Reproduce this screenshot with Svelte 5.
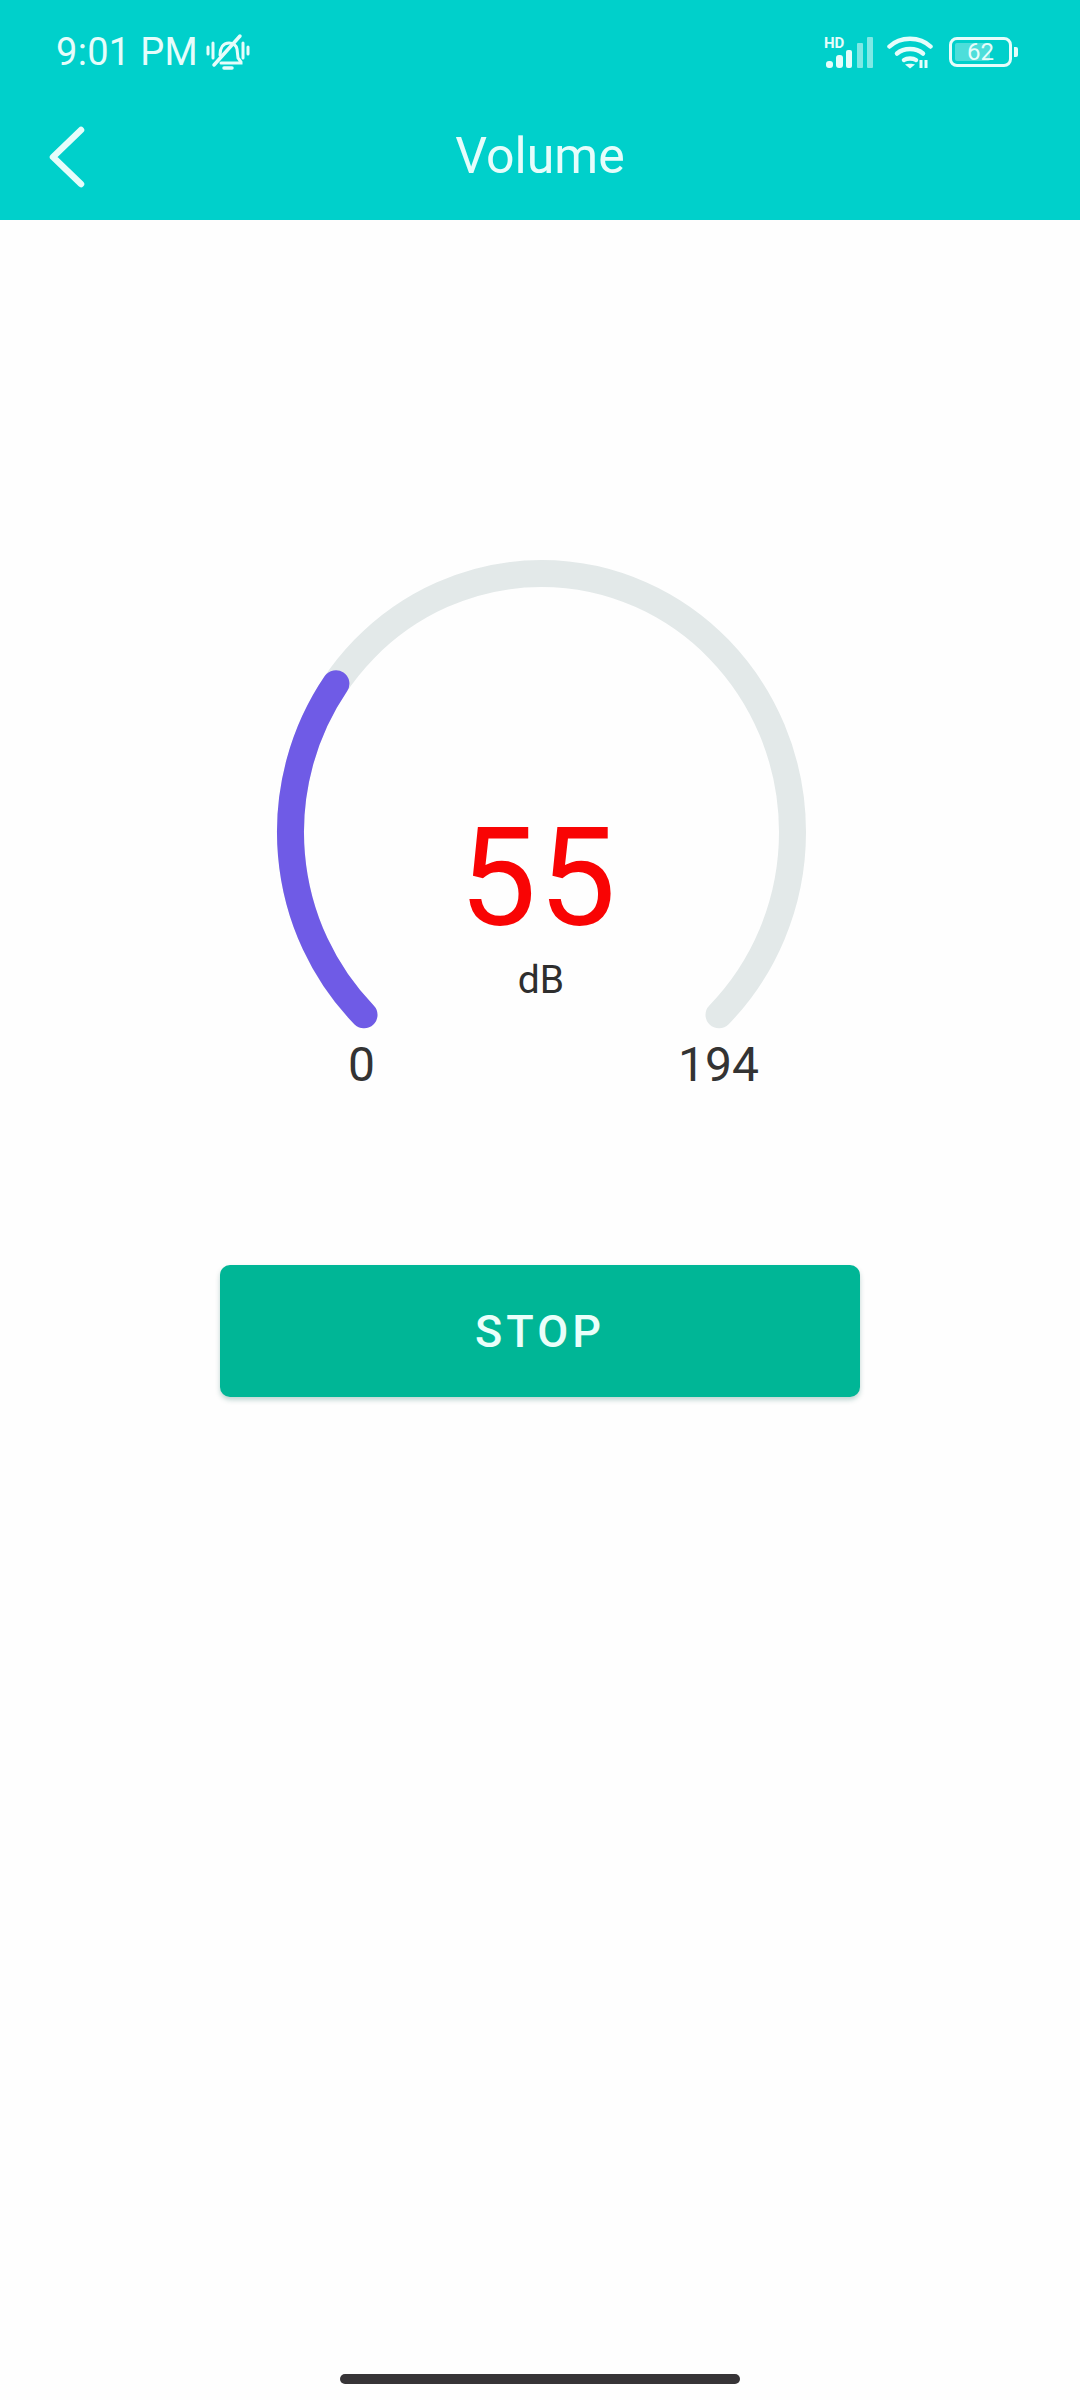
<script>
	const cx = 281.5;
	const cy = 292;
	const rx = 251;
	const ry = 258.5;

	// angle in degrees, measured clockwise from the bottom-left end of the dial
	function point(sweep) {
		const a = ((225 + sweep) * Math.PI) / 180;
		return `${(cx + rx * Math.sin(a)).toFixed(1)} ${(cy - ry * Math.cos(a)).toFixed(1)}`;
	}

	function arc(sweep) {
		const large = sweep > 180 ? 1 : 0;
		return `M${point(0)} A${rx} ${ry} 0 ${large} 1 ${point(sweep)}`;
	}

	const track = arc(270);
	const fill = arc(80);
</script>

<div class="page">
	<header class="header">
		<div class="status">
			<div class="status-left">
				<span class="time">9:01 PM</span>
				<svg class="bell" viewBox="0 0 46 38" fill="none" stroke="currentColor" stroke-width="3" stroke-linecap="round">
					<path d="M3 14v7M8 10v15M38 10v15M43 14v7" />
					<path d="M15 22c0-7 3-12 9-12 4 0 7 2 8 6l1 9 3 4v1H16" />
					<path d="M19 35h8" stroke-width="3.500" />
					<path d="M9 32 35 3" stroke-width="3.500" />
				</svg>
			</div>
			<div class="status-right">
				<div class="signal">
					<span class="hd">HD</span>
					<svg viewBox="0 0 47 31" width="47" height="31" fill="currentColor">
						<rect x="0" y="24" width="7" height="7" rx="3" />
						<rect x="10" y="18" width="7" height="13" rx="3" />
						<rect x="20" y="13" width="6" height="18" rx="2" />
						<rect x="31" y="6" width="6" height="25" rx="1" opacity="0.55" />
						<rect x="41" y="0" width="6" height="31" rx="1" opacity="0.55" />
					</svg>
				</div>
				<svg class="wifi" viewBox="0 0 46 34" fill="none" stroke="currentColor" stroke-width="4.500" stroke-linecap="round">
					<path d="M2.500 11.500C13 1 33 1 43.500 11.500" />
					<path d="M10 18.500c7-6 19-6 26 0" />
					<path d="M17 25c3-2 9-2 12 0" />
					<path d="M23 33.500l-5-4c2-1 8-1 10 0z" fill="currentColor" stroke="none" />
					<path d="M34 25v8M39 25v8" stroke-width="3" stroke-linecap="butt" />
				</svg>
				<div class="battery">
					<div class="cell">
						<span class="level"></span>
						<span class="percent">62</span>
					</div>
					<span class="nub"></span>
				</div>
			</div>
		</div>
		<div class="toolbar">
			<svg class="back" viewBox="0 0 36 62" fill="none" stroke="currentColor" stroke-width="6.500" stroke-linecap="round" stroke-linejoin="round">
				<path d="M32 4 4 31l28 27" />
			</svg>
			<h1>Volume</h1>
		</div>
	</header>

	<main class="content">
		<div class="gauge">
			<svg viewBox="0 0 560 560" width="560" height="560" fill="none" stroke-width="27" stroke-linecap="round">
				<path d={track} stroke="#e3e9e9" />
				<path d={fill} stroke="#6f5be6" />
			</svg>
			<div class="reading">
				<span class="value">55</span>
				<span class="unit">dB</span>
			</div>
			<span class="limit min">0</span>
			<span class="limit max">194</span>
		</div>
		<button type="button" class="stop">STOP</button>
	</main>

	<div class="home-bar"></div>
</div>

<style>
	:global(body) {
		background: #fefefe;
	}

	.page {
		display: flex;
		flex-direction: column;
		height: 2400px;
		font-family: Roboto, "Noto Sans", sans-serif;
		overflow: hidden;
	}

	.header {
		background: #00d0cb;
		color: #e6fdfb;
		height: 220px;
		display: flex;
		flex-direction: column;
	}

	.status {
		display: flex;
		align-items: center;
		justify-content: space-between;
		height: 104px;
		padding: 0 62px 0 56px;
	}

	.status-left,
	.status-right {
		display: flex;
		align-items: center;
	}

	.time {
		font-size: 38px;
		letter-spacing: 0.3px;
	}

	.bell {
		width: 46px;
		height: 38px;
		margin-left: 7px;
	}

	.status-right {
		gap: 14px;
	}

	.signal {
		position: relative;
		display: flex;
		width: 47px;
		height: 31px;
	}

	.hd {
		position: absolute;
		top: -1px;
		left: -2px;
		font-size: 15px;
		font-weight: 700;
		line-height: 1;
	}

	.wifi {
		width: 46px;
		height: 34px;
	}

	.battery {
		display: flex;
		align-items: center;
		gap: 2px;
		margin-left: 2px;
	}

	.cell {
		position: relative;
		display: flex;
		align-items: center;
		justify-content: center;
		box-sizing: border-box;
		width: 63px;
		height: 30px;
		border: 3px solid currentColor;
		border-radius: 8px;
	}

	.level {
		position: absolute;
		top: 3px;
		bottom: 3px;
		left: 3px;
		width: 62%;
		background: rgba(255, 255, 255, 0.3);
		border-radius: 2px;
	}

	.percent {
		position: relative;
		font-size: 24px;
		line-height: 1;
	}

	.nub {
		width: 4px;
		height: 10px;
		background: currentColor;
		border-radius: 0 2px 2px 0;
	}

	.toolbar {
		position: relative;
		flex: 1;
		display: flex;
		align-items: center;
		justify-content: center;
	}

	.back {
		position: absolute;
		left: 49px;
		top: 22px;
		width: 36px;
		height: 62px;
	}

	h1 {
		margin: 0 0 12px;
		font-size: 50px;
		font-weight: 400;
	}

	.content {
		flex: 1;
		display: flex;
		flex-direction: column;
		align-items: center;
		padding-top: 320px;
	}

	.gauge {
		position: relative;
		width: 560px;
		height: 560px;
	}

	.gauge svg {
		display: block;
	}

	.reading {
		position: absolute;
		top: 256px;
		left: 0;
		right: 0;
		display: flex;
		flex-direction: column;
		align-items: center;
	}

	.value {
		color: #f90404;
		font-size: 138px;
		line-height: 164px;
		letter-spacing: 2px;
		margin-left: -3px;
	}

	.unit {
		color: #2e2e2e;
		font-size: 39px;
		line-height: 40px;
		margin-left: 2px;
	}

	.limit {
		position: absolute;
		top: 497px;
		color: #333;
		font-size: 48px;
		line-height: 56px;
	}

	.min {
		left: 88px;
	}

	.max {
		right: 61px;
	}

	.stop {
		display: block;
		width: 640px;
		height: 132px;
		margin-top: 165px;
		border: none;
		border-radius: 10px;
		background: #00b696;
		box-shadow: 0 3px 5px rgba(0, 90, 80, 0.25);
		color: #eafffa;
		font-family: inherit;
		font-size: 45px;
		font-weight: 500;
		letter-spacing: 4px;
	}

	.home-bar {
		flex: none;
		align-self: center;
		width: 400px;
		height: 10px;
		margin-bottom: 16px;
		border-radius: 5px;
		background: #373437;
	}
</style>
